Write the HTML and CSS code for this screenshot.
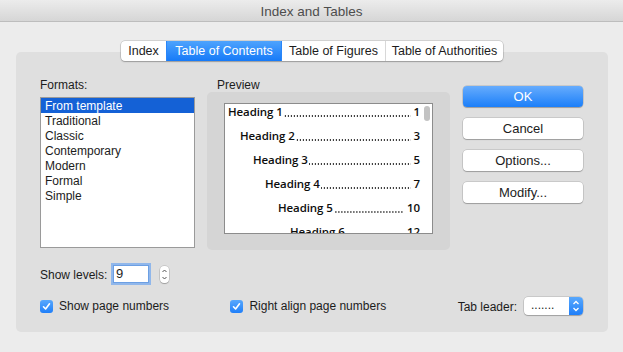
FILE: index.html
```html
<!DOCTYPE html>
<html>
<head>
<meta charset="utf-8">
<link rel="stylesheet" href="styles.css">
</head>
<body>
<div class="titlebar">Index and Tables</div>
<div class="main">
  <div class="tabs">
    <div class="seg">
      <div class="tab t1">Index</div>
      <div class="tab t2 active">Table of Contents</div>
      <div class="tab t3">Table of Figures</div>
      <div class="tab t4">Table of Authorities</div>
    </div>
  </div>
  <div class="panel">
    <div class="top">
      <div class="formats">
        <div class="label">Formats:</div>
        <ul class="list">
          <li class="item sel">From template</li>
          <li class="item">Traditional</li>
          <li class="item">Classic</li>
          <li class="item">Contemporary</li>
          <li class="item">Modern</li>
          <li class="item">Formal</li>
          <li class="item">Simple</li>
        </ul>
      </div>
      <div class="preview">
        <div class="label plabel">Preview</div>
        <div class="pbox">
          <div class="pwhite">
            <div class="trow"><span class="head">Heading 1</span><span class="lead"></span><span class="num">1</span></div>
            <div class="trow l2"><span class="head">Heading 2</span><span class="lead"></span><span class="num">3</span></div>
            <div class="trow l3"><span class="head">Heading 3</span><span class="lead"></span><span class="num">5</span></div>
            <div class="trow l4"><span class="head">Heading 4</span><span class="lead"></span><span class="num">7</span></div>
            <div class="trow l5"><span class="head">Heading 5</span><span class="lead"></span><span class="num">10</span></div>
            <div class="trow l6"><span class="head">Heading 6</span><span class="lead"></span><span class="num">12</span></div>
            <div class="thumb"></div>
          </div>
        </div>
      </div>
      <div class="buttons">
        <div class="btn ok">OK</div>
        <div class="btn">Cancel</div>
        <div class="btn">Options...</div>
        <div class="btn">Modify...</div>
      </div>
    </div>
    <div class="levels">
      <div class="lvl-label">Show levels:</div>
      <div class="input">9</div>
      <div class="stepper">
        <svg width="9" height="17" viewBox="0 0 9 17"><polyline points="2.5,6 4.5,4 6.5,6" fill="none" stroke="#555" stroke-width="1"/><polyline points="2.5,11 4.5,13 6.5,11" fill="none" stroke="#555" stroke-width="1"/></svg>
      </div>
    </div>
    <div class="checks">
      <div class="cgroup g1">
        <span class="chk"><svg width="13" height="13" viewBox="0 0 13 13"><polyline points="3.5,6.8 5.6,9 9.5,3.8" fill="none" stroke="#fff" stroke-width="1.6" stroke-linecap="round" stroke-linejoin="round"/></svg></span>
        <span class="ctext">Show page numbers</span>
      </div>
      <div class="cgroup g2">
        <span class="chk"><svg width="13" height="13" viewBox="0 0 13 13"><polyline points="3.5,6.8 5.6,9 9.5,3.8" fill="none" stroke="#fff" stroke-width="1.6" stroke-linecap="round" stroke-linejoin="round"/></svg></span>
        <span class="ctext">Right align page numbers</span>
      </div>
      <div class="cgroup g3">
        <span class="tl-label">Tab leader:</span>
        <div class="select">
          <div class="sel-val">.......</div>
          <div class="sel-arrows"><svg width="14" height="18" viewBox="0 0 14 18"><polyline points="4.5,7 7,4.5 9.5,7" fill="none" stroke="#fff" stroke-width="1.3"/><polyline points="4.5,11 7,13.5 9.5,11" fill="none" stroke="#fff" stroke-width="1.3"/></svg></div>
        </div>
      </div>
    </div>
  </div>
</div>
</body>
</html>
```

FILE: styles.css
```css
html, body {
  margin: 0;
  padding: 0;
}
body {
  width: 623px;
  height: 352px;
  overflow: hidden;
  background: #ececec;
  font-family: "Liberation Sans", Arial, sans-serif;
  font-size: 12px;
  color: #1c1c1c;
  white-space: nowrap;
}
.titlebar {
  height: 21px;
  border-bottom: 1px solid #bdbdbd;
  background: linear-gradient(#ececec, #d6d6d6);
  text-align: center;
  line-height: 23px;
  color: #4d4d4d;
  font-size: 13.5px;
}
.main {
  padding-top: 19px;
}
.tabs {
  display: flex;
  justify-content: center;
  position: relative;
  z-index: 1;
  padding-left: 1px;
}
.seg {
  display: flex;
  height: 20px;
  background: #fff;
  border-radius: 4px;
  box-shadow: 0 0 0 0.5px rgba(0,0,0,0.22), 0 1px 1.5px rgba(0,0,0,0.22);
  overflow: hidden;
}
.tab {
  line-height: 20px;
  text-align: center;
  border-left: 1px solid #d8d8d8;
  box-sizing: border-box;
  color: #1c1c1c;
  font-size: 12.5px;
}
.tab:first-child { border-left: none; }
.t1 { width: 45px; }
.t2 { width: 115px; }
.t3 { width: 104px; }
.t4 { width: 118px; }
.tab.active {
  background: linear-gradient(#4ea3fd, #167af8);
  color: #fff;
  border-left-color: #2a86f9;
}
.tab.active + .tab { border-left-color: #2a86f9; }
.panel {
  margin: -9px 15px 0 16px;
  height: 280px;
  box-sizing: border-box;
  background: #dfdfdf;
  border-radius: 5px;
  padding: 25px 25px 0 24px;
}
.top {
  display: flex;
  height: 173px;
}
.label {
  line-height: 15px;
  height: 14px;
  padding-top: 1px;
}
.formats {
  width: 155px;
}
.list {
  margin: 5px 0 0;
  padding: 0;
  list-style: none;
  height: 151px;
  box-sizing: border-box;
  border: 1px solid #9a9a9a;
  background: #fff;
}
.item {
  line-height: 15px;
  height: 14px;
  padding: 1px 0 0 4px;
}
.item.sel {
  background: #1461d6;
  color: #fff;
}
.preview {
  width: 243px;
  margin-left: 12px;
}
.plabel {
  padding-left: 10px;
}
.pbox {
  height: 158px;
  box-sizing: border-box;
  background: #d5d5d5;
  border-radius: 5px;
  padding: 11px 0 0 17px;
}
.pwhite {
  position: relative;
  width: 209px;
  height: 131px;
  box-sizing: border-box;
  border: 1px solid #8c8c8c;
  background: #fff;
  overflow: hidden;
  padding: 0 12px 0 3px;
  font-family: "Open Sans", "DejaVu Sans", sans-serif;
  font-weight: 600;
  font-size: 11.5px;
  letter-spacing: -0.1px;
  color: #0d0d0d;
}
.trow {
  display: flex;
  height: 16px;
  line-height: 16px;
  margin-bottom: 8px;
}
.l2 { padding-left: 12px; }
.l3 { padding-left: 25px; }
.l4 { padding-left: 37px; }
.l5 { padding-left: 50px; }
.l6 { padding-left: 62px; }
.head { flex: none; }
.lead {
  flex: 1;
  margin: 0 3px 0 1px;
  height: 16px;
  background-image: linear-gradient(to right, #222 0, #222 1.2px, transparent 1.2px);
  background-size: 3px 1.5px;
  background-repeat: repeat-x;
  background-position: right 0 bottom 3.5px;
}
.num {
  flex: none;
}
.thumb {
  position: absolute;
  right: 2px;
  top: 2px;
  width: 6px;
  height: 15px;
  border-radius: 3px;
  background: #c3c3c3;
}
.buttons {
  width: 120px;
  margin-left: 13px;
  padding-top: 9px;
  display: flex;
  flex-direction: column;
  gap: 11px;
}
.btn {
  height: 21px;
  line-height: 21px;
  text-align: center;
  background: #fff;
  border-radius: 4px;
  box-shadow: 0 0 0 0.5px rgba(0,0,0,0.2), 0 1px 1px rgba(0,0,0,0.22);
  font-size: 13px;
}
.btn.ok {
  background: linear-gradient(#66acfd, #1c7ff9);
  color: #fff;
}
.levels {
  display: flex;
  align-items: center;
  margin-top: 13px;
  height: 22px;
}
.lvl-label {
  width: 73px;
  padding-top: 2px;
}
.input {
  width: 36px;
  height: 18px;
  box-sizing: border-box;
  border: 1px solid #6c9fe3;
  box-shadow: 0 0 0 2px rgba(110,165,240,0.7);
  background: #fff;
  padding-left: 2px;
  line-height: 16px;
  font-size: 13px;
}
.stepper {
  margin-left: 11px;
  width: 9px;
  height: 17px;
  border-radius: 4px;
  background: #fff;
  box-shadow: 0 0 0 0.5px rgba(0,0,0,0.2), 0 1px 1px rgba(0,0,0,0.2);
  display: flex;
}
.checks {
  display: flex;
  align-items: center;
  margin-top: 11px;
  height: 20px;
}
.cgroup {
  display: flex;
  align-items: center;
}
.g1 { width: 191px; }
.g2 { width: 228px; }
.chk {
  width: 13px;
  height: 13px;
  border-radius: 3px;
  background: linear-gradient(#58a8fd, #1f7ff9);
  display: flex;
}
.ctext {
  margin-left: 6px;
}
.tl-label {
  margin-right: 7px;
  padding-top: 2px;
}
.select {
  display: flex;
  width: 59px;
  height: 18px;
  border-radius: 4px;
  background: #fff;
  box-shadow: 0 0 0 0.5px rgba(0,0,0,0.2), 0 1px 1px rgba(0,0,0,0.2);
  overflow: hidden;
}
.sel-val {
  flex: 1;
  padding-left: 7px;
  line-height: 16px;
}
.sel-arrows {
  width: 14px;
  background: linear-gradient(#58a8fd, #1f7ff9);
  display: flex;
}
```
